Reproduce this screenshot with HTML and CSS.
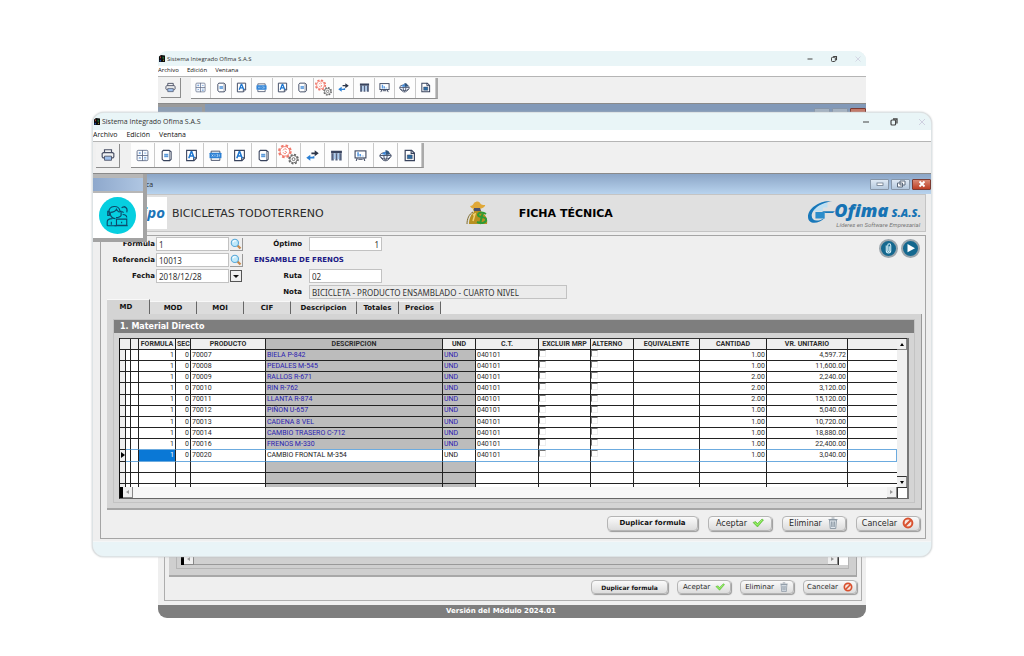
FILE: index.html
```html
<!DOCTYPE html>
<html lang="es">
<head>
<meta charset="utf-8">
<title>Sistema Integrado Ofima S.A.S</title>
<link rel="stylesheet" href="styles.css">
</head>
<body>
<svg class="sprite" aria-hidden="true">
  <defs>
    <symbol id="app" viewBox="0 0 16 16"><path d="M2 4l4-3 8 1v13l-12 0z" fill="#0c0c0c"/><path d="M4 5l2-2v4l-2 1z" fill="#a63a30"/><path d="M9 4l3 1v4l-3-1z" fill="#1d6a34"/><path d="M3 12l3-2v4H3z" fill="#2450a8"/><path d="M10 10l2 1v2l-2-1z" fill="#b3a02a"/></symbol>
    <symbol id="print" viewBox="0 0 24 24"><path d="M6 8V3h12v5M6 17H3.500L2 15V9.500L4 8h16l2 1.500V15l-1.500 2H18" fill="none" stroke="#4a5065" stroke-width="2"/><path d="M6 14h12v7H6z" fill="#9fc0ec" stroke="#4a5065" stroke-width="1.500"/></symbol>
    <symbol id="grid" viewBox="0 0 24 24"><rect x="2" y="2.500" width="20" height="19" rx="2" fill="#fafcff" stroke="#5e6b86" stroke-width="1.600"/><path d="M12 2v20M2 12h20" stroke="#5e6b86" stroke-width="1.600"/><path d="M5 7.500h4M7 5.500v4M15 7.500h4M5.500 15l3 3M8.500 15l-3 3M15 15.500h4M15 18.500h4" stroke="#5b91d4" stroke-width="1.400"/></symbol>
    <symbol id="doc" viewBox="0 0 24 24"><path d="M4 5l2-2.500h11L20.500 5v14L18 21.500H7L4 19z" fill="#fff" stroke="#38435d" stroke-width="2"/><path d="M17.500 3v18" stroke="#38435d" stroke-width="1"/><rect x="7.500" y="8.500" width="8" height="7" fill="#a9cdf3"/><path d="M8 10.500h7M8 13.500h7" stroke="#2877c8" stroke-width="1.400"/></symbol>
    <symbol id="letter" viewBox="0 0 24 24"><path d="M3 2.500h18V17l-4.500 4.500H3z" fill="#fff" stroke="#38435d" stroke-width="2"/><path d="M21 16h-5v5" fill="none" stroke="#38435d" stroke-width="2"/><path d="M7 17l4.500-12h1L17 17M9 13h6" fill="none" stroke="#1f77d0" stroke-width="2.800"/></symbol>
    <symbol id="card" viewBox="0 0 24 24"><path d="M4 8V4h16v4M4 17v4h16v-4" fill="none" stroke="#38435d" stroke-width="1.600"/><rect x="1" y="7" width="22" height="10" rx="1" fill="#2a7fd4"/><path d="M5 10l3 4M8 10l-3 4M11 10v4M14 10h2v4h-2M19 10v4" stroke="#d9ecff" stroke-width="1.200" fill="none"/></symbol>
    <symbol id="gears" viewBox="0 0 24 24"><circle cx="8" cy="8" r="6.200" fill="none" stroke="#f0796c" stroke-width="2.600" stroke-dasharray="2.700 2.170"/><circle cx="8" cy="8" r="5.200" fill="#fff" stroke="#f0796c" stroke-width="1"/><path d="M6 7l2-2 2 1M6 9l2 2 2-2-2-1" fill="none" stroke="#f0796c" stroke-width="1"/><circle cx="17.500" cy="16.500" r="4.600" fill="none" stroke="#666" stroke-width="2.400" stroke-dasharray="2 1.610"/><circle cx="17.500" cy="16.500" r="4" fill="#fff" stroke="#666" stroke-width="1"/><circle cx="17.500" cy="16.500" r="1.600" fill="none" stroke="#666" stroke-width="1"/></symbol>
    <symbol id="swap" viewBox="0 0 24 24"><path d="M10 8h7" stroke="#2d3548" stroke-width="3"/><path d="M16 2.500L23.500 8 16 13.500z" fill="#2d3548"/><path d="M14 16H7M14 17.500v-4" fill="none" stroke="#2a7fd4" stroke-width="3"/><path d="M8 10.500L.5 16 8 21.500z" fill="#2a7fd4"/></symbol>
    <symbol id="columns" viewBox="0 0 24 24"><path d="M2 3h20v5H2z" fill="#38435d"/><path d="M2.500 8h4.500v13H2.500zM10 8h4v13h-4zM17 8h4.500v13H17z" fill="#54627f"/><path d="M7 8h3v11H7zM14 8h3v11h-3z" fill="#a9cbf0"/></symbol>
    <symbol id="board" viewBox="0 0 24 24"><rect x="2" y="3.500" width="20" height="13" fill="#fff" stroke="#38435d" stroke-width="2"/><path d="M6 17l-2 5M18 17l2 5M8 19h8" stroke="#38435d" stroke-width="2"/><path d="M6 6h3v8H6zM10 9h3v5h-3z" fill="#5b9be2"/><path d="M14 12h4v2h-4z" fill="#9cc5f1"/></symbol>
    <symbol id="globe" viewBox="0 0 24 24"><ellipse cx="12" cy="12.500" rx="10.500" ry="6" fill="#eef5ff" stroke="#38435d" stroke-width="1.700"/><path d="M4 15c2 9 14 9 16 0M2 12h20M9 12c0 4 1 7 3 9M15 12c0 4-1 7-3 9" fill="none" stroke="#38435d" stroke-width="1.600"/><path d="M12 11V2a9 9 0 0 1 8 8z" fill="#31567f"/><path d="M5 9l7-5v7z" fill="#3b8ae0"/></symbol>
    <symbol id="report" viewBox="0 0 24 24"><path d="M4 2.500h12l5 5v14H4z" fill="#fff" stroke="#38435d" stroke-width="2.200"/><path d="M15 2v6h6" fill="none" stroke="#38435d" stroke-width="2"/><path d="M8 11h9v7H8z" fill="#2c6da5" stroke="#38435d"/></symbol>
    <symbol id="min" viewBox="0 0 12 12"><path d="M3 6h6" stroke="#444" stroke-width="1.200"/></symbol>
    <symbol id="max" viewBox="0 0 12 12"><rect x="3" y="4" width="4.600" height="5" rx="1" fill="none" stroke="#444" stroke-width="1.200"/><path d="M5 3h4v4.500" fill="none" stroke="#444" stroke-width="1.300"/></symbol>
    <symbol id="close" viewBox="0 0 12 12"><path d="M3 3l6 6M9 3l-6 6" stroke="#cfd0e0" stroke-width="1"/></symbol>
    <symbol id="search" viewBox="0 0 16 16"><path d="M9 9l5 5" stroke="#c68a4e" stroke-width="3"/><circle cx="6.500" cy="6.500" r="4.800" fill="#bfe9fa" stroke="#5aa9d8" stroke-width="1.500"/><path d="M4 6c0-2 2-3 4-2" stroke="#fff" fill="none" stroke-width="1.500"/></symbol>
    <symbol id="check" viewBox="0 0 24 20"><path d="M2 9l5-2 4 4L20 2l3 2-12 14z" fill="#6fdc3c" stroke="#4fae2c"/><path d="M5 9l6 5L20 4" stroke="#b7f58f" fill="none" stroke-width="1.500"/></symbol>
    <symbol id="trash" viewBox="0 0 20 24"><path d="M3 6h14l-1.500 17h-11z" fill="#dfe6ec" stroke="#7e8b98" stroke-width="1.600"/><path d="M1 5h18M7 2h6M7 9l.5 11M10 9v11M13 9l-.5 11" stroke="#7e8b98" stroke-width="1.600" fill="none"/></symbol>
    <symbol id="stop" viewBox="0 0 24 24"><circle cx="12" cy="12" r="8.800" fill="#f6e6df" stroke="#d9512f" stroke-width="4"/><path d="M6 18L18 6" stroke="#d9512f" stroke-width="4"/></symbol>
  </defs>
</svg>

<main class="desktop">
  <section class="window window-back" aria-label="Ventana posterior">
    <header class="titlebar">
      <svg class="app-icon"><use href="#app"/></svg>
      <span class="title">Sistema Integrado Ofima S.A.S</span>
      <button class="winctl" aria-label="Minimizar"><svg><use href="#min"/></svg></button>
      <button class="winctl" aria-label="Restaurar"><svg><use href="#max"/></svg></button>
      <button class="winctl" aria-label="Cerrar"><svg><use href="#close"/></svg></button>
    </header>
    <nav class="menubar"><a href="#">Archivo</a><a href="#">Edición</a><a href="#">Ventana</a></nav>
    <div class="toolbar">
      <button class="tool tool-print" aria-label="Imprimir"><svg><use href="#print"/></svg></button>
      <div class="tool-group">
        <button class="tool" aria-label="Calculadora"><svg><use href="#grid"/></svg></button>
        <button class="tool" aria-label="Documento"><svg><use href="#doc"/></svg></button>
        <button class="tool" aria-label="Texto"><svg><use href="#letter"/></svg></button>
        <button class="tool" aria-label="Códigos"><svg><use href="#card"/></svg></button>
        <button class="tool" aria-label="Texto 2"><svg><use href="#letter"/></svg></button>
        <button class="tool" aria-label="Documento 2"><svg><use href="#doc"/></svg></button>
        <button class="tool tool-gears" aria-label="Configuración"><svg><use href="#gears"/></svg></button>
        <button class="tool" aria-label="Intercambiar"><svg><use href="#swap"/></svg></button>
        <button class="tool" aria-label="Columnas"><svg><use href="#columns"/></svg></button>
        <button class="tool" aria-label="Tablero"><svg><use href="#board"/></svg></button>
        <button class="tool" aria-label="Global"><svg><use href="#globe"/></svg></button>
        <button class="tool" aria-label="Informe"><svg><use href="#report"/></svg></button>
      </div>
    </div>
    <div class="mdi-title">
      <span class="back-palette"></span>
      <button class="mdi-btn" aria-label="Minimizar ficha"></button>
      <button class="mdi-btn" aria-label="Restaurar ficha"></button>
      <button class="mdi-btn mdi-close" aria-label="Cerrar ficha"></button>
    </div>
    <div class="back-body">
      <div class="back-panel">
        <div class="back-frame"><div class="back-grid">
          <div class="hscroll"><i class="block"></i><button class="arrow left" aria-label="Izquierda"></button><span class="track"></span><button class="arrow right" aria-label="Derecha"></button><i class="corner"></i></div>
        </div></div>
        <div class="actions">
          <button class="btn btn-dup">Duplicar formula</button>
          <button class="btn">Aceptar <svg class="i-check"><use href="#check"/></svg></button>
          <button class="btn">Eliminar <svg class="i-trash"><use href="#trash"/></svg></button>
          <button class="btn">Cancelar <svg><use href="#stop"/></svg></button>
        </div>
      </div>
    </div>
    <footer class="status">Versión del Módulo 2024.01</footer>
  </section>

  <section class="window window-front" aria-label="Ficha técnica">
    <header class="titlebar">
      <svg class="app-icon"><use href="#app"/></svg>
      <span class="title">Sistema Integrado Ofima S.A.S</span>
      <button class="winctl" aria-label="Minimizar"><svg><use href="#min"/></svg></button>
      <button class="winctl" aria-label="Restaurar"><svg><use href="#max"/></svg></button>
      <button class="winctl" aria-label="Cerrar"><svg><use href="#close"/></svg></button>
    </header>
    <nav class="menubar"><a href="#">Archivo</a><a href="#">Edición</a><a href="#">Ventana</a></nav>
    <div class="toolbar">
      <button class="tool tool-print" aria-label="Imprimir"><svg><use href="#print"/></svg></button>
      <div class="tool-group">
        <button class="tool" aria-label="Calculadora"><svg><use href="#grid"/></svg></button>
        <button class="tool" aria-label="Documento"><svg><use href="#doc"/></svg></button>
        <button class="tool" aria-label="Texto"><svg><use href="#letter"/></svg></button>
        <button class="tool" aria-label="Códigos"><svg><use href="#card"/></svg></button>
        <button class="tool" aria-label="Texto 2"><svg><use href="#letter"/></svg></button>
        <button class="tool" aria-label="Documento 2"><svg><use href="#doc"/></svg></button>
        <button class="tool tool-gears" aria-label="Configuración"><svg><use href="#gears"/></svg></button>
        <button class="tool" aria-label="Intercambiar"><svg><use href="#swap"/></svg></button>
        <button class="tool" aria-label="Columnas"><svg><use href="#columns"/></svg></button>
        <button class="tool" aria-label="Tablero"><svg><use href="#board"/></svg></button>
        <button class="tool" aria-label="Global"><svg><use href="#globe"/></svg></button>
        <button class="tool" aria-label="Informe"><svg><use href="#report"/></svg></button>
      </div>
    </div>

    <div class="mdi">
      <div class="mdi-title">
        <span class="mdi-caption">ca</span>
        <button class="mdi-btn" aria-label="Minimizar ficha"><svg viewBox="0 0 12 8"><rect x="3" y="3" width="6" height="2.500" fill="#fff" stroke="#6c7a8c" stroke-width=".8"/></svg></button>
        <button class="mdi-btn" aria-label="Restaurar ficha"><svg viewBox="0 0 12 8"><path d="M5 1h5v4H5zM2.500 3h5v4h-5z" fill="#fff" stroke="#5c6a7c"/></svg></button>
        <button class="mdi-btn mdi-close" aria-label="Cerrar ficha"><svg viewBox="0 0 12 8"><path d="M3.500 1.500l5 5M8.500 1.500l-5 5" stroke="#fff" stroke-width="1.800"/></svg></button>
      </div>

      <div class="palette">
        <div class="palette-bar"></div>
        <button class="palette-btn" aria-label="Soporte">
          <svg viewBox="0 0 36 36"><circle cx="18" cy="18" r="18" fill="#06cfe0"/><g fill="none" stroke="#0b4a6b" stroke-width="1.100"><path d="M9.500 15c0-7 10-8 11-1M10 14h-1.500v4H10zM20 14h1.500v4c-1 2-3 2-5 2M11 15c3 0 5-1 6-3 1 2 2 2 3 3M11 15v2c1 3 3 4 5 4M8 28v-4c0-2 2-3 5-3M8 28h9M12 24v3"/><path d="M17 21.500h10v6H17zM15 28h13M22 24v1.500M22 10.500c3-2 6 0 5 3M24 9c3 1 4 3 3 6M23 17c2 0 4 1 4 3M22 14l2 1"/></g></svg>
        </button>
      </div>

      <div class="banner">
        <span class="logo-part">ipo</span>
        <span class="company">BICICLETAS TODOTERRENO</span>
        <svg class="bag" viewBox="0 0 22 24"><path d="M7 8l1 3c-3 2-5 7-5 12h18c1-5-1-9-5-11l-2-4z" fill="#b8901f"/><path d="M7 11C3 13 1 18 1 23" stroke="#7d6a2c" stroke-width="1" fill="none"/><path d="M4 5c2 0 3-1 4-3 2-2 5-2 6 0 1 2 3 2 5 2 1 1-3 4-6 4H8C6 7 5 7 4 5z" fill="#e0a838"/><path d="M8 7h6l1 3H8z" fill="#4a5170"/><path d="M20 13c-3-2-8-2-8 1s7 1 8 4c1 4-5 5-9 3M17 11l-3 12" fill="none" stroke="#2f9a35" stroke-width="2"/><path d="M7 14l2-1-2 7" stroke="#efd071" fill="none" stroke-width="1.500"/></svg>
        <h1>FICHA TÉCNICA</h1>
        <div class="ofima">
          <svg viewBox="0 0 30 28"><path d="M5 7h8V3h9v5h-5v4H5z" fill="#bfe0f3"/><path d="M9 13h10v7H9z" fill="#2c8dcb"/><path d="M27 2C17-1 1 8 1 18c0 9 12 8 18 1-7 5-14 4-14-2C5 10 16 2 27 2z" fill="#1878ba"/><path d="M16 12h14l-2 2h-8z" fill="#1878ba"/></svg>
          <div class="ofima-text"><div class="ofima-name"><b>Ofima</b><b class="sas">S.A.S.</b></div><i>Líderes en Software Empresarial</i></div>
        </div>
      </div>

      <form class="sheet">
        <div class="fields">
          <div class="fields-left">
            <label for="formula">Formula</label><input id="formula" value="1"><button type="button" class="lookup" aria-label="Buscar fórmula"><svg><use href="#search"/></svg></button>
            <label for="ref">Referencia</label><input id="ref" value="10013"><button type="button" class="lookup" aria-label="Buscar referencia"><svg><use href="#search"/></svg></button>
            <label for="fecha">Fecha</label><input id="fecha" value="2018/12/28"><button type="button" class="drop" aria-label="Elegir fecha"></button>
          </div>
          <div class="fields-right">
            <label for="optimo">Óptimo</label><input id="optimo" class="num" value="1">
            <output>ENSAMBLE DE FRENOS</output>
            <label for="ruta">Ruta</label><input id="ruta" value="02">
            <label for="nota">Nota</label><input id="nota" class="note" readonly value="BICICLETA - PRODUCTO ENSAMBLADO - CUARTO NIVEL">
          </div>
          <div class="rounds">
            <button type="button" aria-label="Adjuntar"><svg viewBox="0 0 20 20"><path d="M7 6v7c0 4 6 4 6 0V6c0-3-4-3-4 0v7c0 1.500 2 1.500 2 0V7" fill="none" stroke="#d8f3fa" stroke-width="1.400"/></svg></button>
            <button type="button" aria-label="Reproducir"><svg viewBox="0 0 20 20"><path d="M6 4l10 5.500L6 15z" fill="#fff"/></svg></button>
          </div>
        </div>

        <div class="tabs" role="tablist">
          <button type="button" role="tab" class="tab active">MD</button>
          <button type="button" role="tab" class="tab">MOD</button>
          <button type="button" role="tab" class="tab">MOI</button>
          <button type="button" role="tab" class="tab">CIF</button>
          <button type="button" role="tab" class="tab wide">Descripcion</button>
          <button type="button" role="tab" class="tab mid">Totales</button>
          <button type="button" role="tab" class="tab mid">Precios</button>
        </div>

        <div class="tabpanel">
          <div class="frame">
            <h2>1. Material Directo</h2>
            <div class="gridbox">
              <div class="gridmain">
                <table>
                  <colgroup><col class="c6"><col class="c5"><col class="c8"><col class="c37"><col class="c15"><col class="c75"><col class="c177"><col class="c33"><col class="c63"><col class="c52"><col class="c43"><col class="c66"><col class="c67"><col class="c81"><col></colgroup>
                  <thead><tr><th colspan="2"></th><th></th><th>FORMULA</th><th>SEC</th><th>PRODUCTO</th><th class="g">DESCRIPCION</th><th>UND</th><th>C.T.</th><th>EXCLUIR MRP</th><th class="l">ALTERNO</th><th>EQUIVALENTE</th><th>CANTIDAD</th><th>VR. UNITARIO</th><th></th></tr></thead>
                  <tbody>
                    <tr><td></td><td></td><td></td><td>1</td><td>0</td><td>70007</td><td>BIELA P-842</td><td>UND</td><td>040101</td><td><input type="checkbox" aria-label="Excluir MRP"></td><td><input type="checkbox" aria-label="Alterno"></td><td></td><td>1.00</td><td>4,597.72</td><td></td></tr>
                    <tr><td></td><td></td><td></td><td>1</td><td>0</td><td>70008</td><td>PEDALES M-545</td><td>UND</td><td>040101</td><td><input type="checkbox" aria-label="Excluir MRP"></td><td><input type="checkbox" aria-label="Alterno"></td><td></td><td>1.00</td><td>11,600.00</td><td></td></tr>
                    <tr><td></td><td></td><td></td><td>1</td><td>0</td><td>70009</td><td>RALLOS R-671</td><td>UND</td><td>040101</td><td><input type="checkbox" aria-label="Excluir MRP"></td><td><input type="checkbox" aria-label="Alterno"></td><td></td><td>2.00</td><td>2,240.00</td><td></td></tr>
                    <tr><td></td><td></td><td></td><td>1</td><td>0</td><td>70010</td><td>RIN R-762</td><td>UND</td><td>040101</td><td><input type="checkbox" aria-label="Excluir MRP"></td><td><input type="checkbox" aria-label="Alterno"></td><td></td><td>2.00</td><td>3,120.00</td><td></td></tr>
                    <tr><td></td><td></td><td></td><td>1</td><td>0</td><td>70011</td><td>LLANTA R-874</td><td>UND</td><td>040101</td><td><input type="checkbox" aria-label="Excluir MRP"></td><td><input type="checkbox" aria-label="Alterno"></td><td></td><td>2.00</td><td>15,120.00</td><td></td></tr>
                    <tr><td></td><td></td><td></td><td>1</td><td>0</td><td>70012</td><td>PIÑON U-657</td><td>UND</td><td>040101</td><td><input type="checkbox" aria-label="Excluir MRP"></td><td><input type="checkbox" aria-label="Alterno"></td><td></td><td>1.00</td><td>5,040.00</td><td></td></tr>
                    <tr><td></td><td></td><td></td><td>1</td><td>0</td><td>70013</td><td>CADENA 8 VEL</td><td>UND</td><td>040101</td><td><input type="checkbox" aria-label="Excluir MRP"></td><td><input type="checkbox" aria-label="Alterno"></td><td></td><td>1.00</td><td>10,720.00</td><td></td></tr>
                    <tr><td></td><td></td><td></td><td>1</td><td>0</td><td>70014</td><td>CAMBIO TRASERO C-712</td><td>UND</td><td>040101</td><td><input type="checkbox" aria-label="Excluir MRP"></td><td><input type="checkbox" aria-label="Alterno"></td><td></td><td>1.00</td><td>18,880.00</td><td></td></tr>
                    <tr class="before"><td></td><td></td><td></td><td>1</td><td>0</td><td>70016</td><td>FRENOS M-330</td><td>UND</td><td>040101</td><td><input type="checkbox" aria-label="Excluir MRP"></td><td><input type="checkbox" aria-label="Alterno"></td><td></td><td>1.00</td><td>22,400.00</td><td></td></tr>
                    <tr class="current"><td><i class="pointer"></i></td><td></td><td></td><td>1</td><td>0</td><td>70020</td><td>CAMBIO FRONTAL M-354</td><td>UND</td><td>040101</td><td><input type="checkbox" aria-label="Excluir MRP"></td><td><input type="checkbox" aria-label="Alterno"></td><td></td><td>1.00</td><td>3,040.00</td><td></td></tr>
                    <tr><td></td><td></td><td></td><td></td><td></td><td></td><td></td><td></td><td></td><td></td><td></td><td></td><td></td><td></td><td></td></tr>
                    <tr><td></td><td></td><td></td><td></td><td></td><td></td><td></td><td></td><td></td><td></td><td></td><td></td><td></td><td></td><td></td></tr>
                    <tr class="stub"><td></td><td></td><td></td><td></td><td></td><td></td><td></td><td></td><td></td><td></td><td></td><td></td><td></td><td></td><td></td></tr>
                  </tbody>
                </table>
                <div class="vscroll"><button type="button" class="arrow up" aria-label="Arriba"></button><span class="track"></span><button type="button" class="arrow down" aria-label="Abajo"></button></div>
              </div>
              <div class="hscroll"><i class="block"></i><button type="button" class="arrow left" aria-label="Izquierda"></button><span class="track"></span><button type="button" class="arrow right" aria-label="Derecha"></button><i class="corner"></i></div>
            </div>
          </div>
        </div>

        <div class="actions">
          <button type="button" class="btn btn-dup">Duplicar formula</button>
          <button type="button" class="btn">Aceptar <svg class="i-check"><use href="#check"/></svg></button>
          <button type="button" class="btn">Eliminar <svg class="i-trash"><use href="#trash"/></svg></button>
          <button type="button" class="btn">Cancelar <svg><use href="#stop"/></svg></button>
        </div>
      </form>
    </div>
    <footer class="front-foot"></footer>
  </section>
</main>
</body>
</html>
```

FILE: styles.css
```css
* { box-sizing: border-box; }
body { margin: 0; background: #fff; color: #2b2b2b; font-family: "DejaVu Sans", sans-serif; }
button, input { font: inherit; color: inherit; margin: 0; padding: 0; border: 0; background: none; min-width: 0; }
svg { display: block; flex: none; }
.sprite { position: absolute; width: 0; height: 0; }

.desktop { position: relative; min-height: 656px; overflow: hidden; }
.window { position: absolute; display: flex; flex-direction: column; overflow: hidden; background: #efefef; }
.window-back { left: 158px; right: 158px; top: 51px; height: 567px; border-radius: 9px; }
.window-front { left: 92px; right: 92px; top: 112px; border: 1px solid #dde3e5; border-radius: 12px; box-shadow: 0 0 2px #b8bcbe; }

/* window chrome */
.titlebar { display: flex; align-items: center; height: 17px; background: #e9f5f7; font: 7px "Open Sans", sans-serif; }
.app-icon { width: 8px; height: 9px; }
.title { flex: 1; padding-left: 1px; color: #333; }
.winctl { width: 28px; display: grid; place-items: center; }
.winctl svg { width: 12px; height: 12px; }
.titlebar .winctl:last-child { width: 18px; margin-left: 5px; }
.menubar { display: flex; gap: 9px; height: 11px; background: #fff; font: 7px/9px "Open Sans", sans-serif; }
.menubar a { color: #111; text-decoration: none; }
.toolbar { display: flex; align-items: center; height: 33px; padding: 0 3px 4px; gap: 11px; border-top: 1px solid #b5b5b5; border-bottom: 1px solid #8a8a8a; background: #f0f0f0; }
.tool { width: 24px; height: 24px; display: grid; place-items: center; background: #fdfdfd; border-right: 1px solid #c9c9c9; }
.tool svg { width: 13px; height: 13px; }
.tool-gears svg { width: 23px; height: 22px; }
.tool-print { background: #f2f2f2; border-bottom: 1px solid #8d8d8d; border-right-color: #8d8d8d; }
.tool-print svg { width: 14px; height: 14px; }
.tool-group { display: flex; width: 293px; border-bottom: 1px solid #8d8d8d; border-right: 2px solid #aaa; }
.tool-group .tool { flex: 1; }
.mdi-title { display: flex; align-items: center; justify-content: flex-end; gap: 2px; height: 20px; background: linear-gradient(#8ba5c6, #b8d3ee); }
.mdi-caption { flex: 1; padding-left: 53px; font: 7px "Open Sans", sans-serif; }
.mdi-btn { width: 19px; height: 11px; display: grid; place-items: center; border: 1px solid #8796a8; border-radius: 1px; background: linear-gradient(#dfe9f4, #b4c8dd); }
.mdi-btn svg { width: 12px; height: 8px; }
.mdi-close { background: linear-gradient(#d98873, #bd3e24); border-color: #7c3a31; }

/* back window */
.window-back .titlebar { height: 15px; flex: none; font-size: 6px; }
.window-back .winctl { width: 24px; }
.window-back .winctl svg { width: 10px; height: 10px; }
.window-back .titlebar .winctl:last-child { width: 16px; margin-left: 4px; }
.window-back .menubar { height: 10px; flex: none; gap: 8px; font-size: 6px; }
.window-back .toolbar { height: 28px; flex: none; gap: 10px; padding-bottom: 4px; }
.window-back .tool { width: 20px; height: 20px; }
.window-back .tool-group { width: 247px; }
.window-back .tool svg { width: 11px; height: 11px; }
.window-back .tool-gears svg { width: 19px; height: 18px; }
.window-back .mdi-title { height: 17px; flex: none; background: #8299b8; }
.window-back .mdi-btn { height: 9px; width: 16px; background: #a5b3c2; }
.window-back .mdi-close { background: #c27766; }
.back-palette { align-self: stretch; width: 47px; margin-right: auto; border: 3px solid #9a9a9a; border-left: 0; background: #8c9db3; }
.back-body { flex: 1; display: flex; flex-direction: column; padding: 0 4px 4px 6px; }
.back-panel { flex: 1; display: flex; flex-direction: column; border: 1px solid #adadad; }
.back-frame { flex: 1; display: flex; margin: 0 4px; padding: 0 7px 6px; background: #cfcfcf; border-right: 1px solid #a3a3a3; border-bottom: 2px solid #a8a8a8; }
.back-grid { flex: 1; display: flex; align-items: flex-end; padding: 0 0 3px 4px; border: 1px solid #b5b5b5; }
.back-grid .hscroll { flex: 1; }
.back-grid .track { background: #d0d0d0; border-bottom: 1px solid #999; }
.window-back .actions { height: 23px; padding: 0 4px 3px 0; gap: 9px; }
.window-back .btn { width: 54px; height: 14px; font-size: 7px; }
.window-back .btn-dup { width: 77px; font-size: 6px; }
.window-back .btn svg { width: 10px; height: 10px; }
.status { height: 13px; flex: none; background: #7e7e7e; color: #fff; text-align: center; font: bold 7px/13px "DejaVu Sans", sans-serif; padding-right: 22px; }

/* document window */
.mdi { position: relative; padding-bottom: 2px; }
.palette { position: absolute; left: 0; top: 0; width: 54px; padding: 4px 0 0; background: #b7b7b7; border-right: 4px solid #a3a3a3; border-bottom: 4px solid #a3a3a3; }
.palette-bar { height: 13px; background: linear-gradient(90deg, #8ea8cc, #afc6e2); margin-bottom: 2px; }
.palette-btn { display: block; width: 100%; padding: 4px 5px 4px 6px; background: #fff; }
.palette-btn svg { width: 37px; height: 37px; }
.banner { display: flex; align-items: center; height: 38px; margin-right: 5px; padding: 0 4px 0 45px; background: #e0e0e0; border: 1px solid #c4c4c4; }
.logo-part { width: 28px; align-self: stretch; margin: 2px 0; background: #fff; color: #1c75b8; font: italic bold 15px/30px "Open Sans", sans-serif; text-align: right; padding-right: 2px; }
.company { margin-left: 5px; font-size: 11px; white-space: nowrap; }
.bag { width: 22px; height: 24px; margin-left: 142px; }
.banner h1 { margin: 0 auto 0 31px; color: #000; font-size: 11px; white-space: nowrap; }
.ofima { display: flex; align-items: center; color: #1773b4; }
.ofima > svg { width: 30px; height: 26px; margin-right: -2px; }
.ofima-text { padding-top: 2px; }
.ofima-name { display: flex; align-items: baseline; gap: 3px; font: italic 18px/18px "Open Sans", sans-serif; }
.ofima-name b { font-weight: 800; }
.ofima-name .sas { font-size: 11px; }
.ofima-text i { display: block; padding-left: 2px; color: #777; font: italic 6px/6px Roboto, sans-serif; }

/* form */
.sheet { margin: 3px 5px 0 7px; border: 1px solid #a5a5a5; background: #efefef; }
.fields { display: flex; align-items: flex-start; padding: 1px 5px 0 1px; height: 63px; }
.fields-left, .fields-right { display: grid; grid-auto-rows: 14px; row-gap: 2px; align-items: center; font: bold 7px "DejaVu Sans", sans-serif; }
.fields-left { grid-template-columns: 53px 73px 15px; column-gap: 1px; }
.fields-right { grid-template-columns: 48px 258px; column-gap: 7px; margin-left: 9px; }
.fields label { text-align: right; color: #111; }
.fields input { height: 14px; border: 1px solid #c2c2c2; background: #fff; padding: 0 2px; font: 8px "Noto Sans", sans-serif; color: #333; }
.fields-right input { width: 73px; }
.fields-right .num { text-align: right; }
.fields-right .note { width: auto; background: #ebebeb; }
.fields output { grid-column: 1 / -1; color: #1c1a86; }
.lookup { width: 13px; height: 13px; display: grid; place-items: center; border-right: 1px solid #999; border-bottom: 1px solid #999; }
.lookup svg { width: 12px; height: 12px; }
.drop { width: 12px; height: 12px; display: grid; place-items: center; border: 1px solid #555; }
.drop::before { content: ""; border: 3px solid transparent; border-top-color: #111; border-bottom: 0; }
.rounds { display: flex; gap: 3px; margin: 2px 0 0 auto; }
.rounds button { width: 19px; height: 19px; border-radius: 50%; border: 2px solid #9aa5ac; background: #14688f; }
.rounds svg { width: 15px; height: 15px; }

.tabs { display: flex; align-items: flex-end; height: 15px; padding-left: 6px; font: bold 7px "DejaVu Sans", sans-serif; color: #111; }
.tab { width: 47px; height: 13px; background: #dcdcdc; border-right: 1px solid #666; border-top: 1px solid #f8f8f8; }
.tab.active { width: 43px; height: 15px; background: #d4d4d4; padding-right: 4px; }
.tab.wide { width: 66px; }
.tab.mid { width: 42px; }
.tabpanel { margin: 0 3px 0 6px; padding: 5px 6px; background: #d4d4d4; border-right: 1px solid #999; border-bottom: 2px solid #a6a6a6; }
.frame { border: 1px solid #c3c3c3; padding-bottom: 3px; }
.frame h2 { margin: 0; padding-left: 6px; height: 13px; background: #7e7e7e; color: #fff; font: bold 8px/13px "DejaVu Sans", sans-serif; }

/* data grid */
.gridbox { margin: 5px 5px 0; border-left: 1px solid #111; border-right: 2px solid #777; border-bottom: 1px solid #666; background: #fff; }
.gridmain { display: flex; border-top: 1px solid #333; }
.gridmain table { flex: 1; width: 100%; height: 148px; table-layout: fixed; border-collapse: separate; border-spacing: 0; font: 7px/9px Roboto, sans-serif; }
th, td { padding: 0 1px; height: 11px; border-right: 1px solid #222; border-bottom: 1px solid #222; white-space: nowrap; overflow: hidden; text-align: left; }
th { background: #efefef; text-align: center; font-weight: bold; }
th.l { text-align: left; }
th.g { background: #b9b9b9; }
tr > :last-child { border-right: 0; }
td:first-child { background: #efefef; padding: 0; }
td:nth-child(4), td:nth-child(5), td:nth-child(13), td:nth-child(14) { text-align: right; }
td:nth-child(7), td:nth-child(8) { background: #bcbcbc; color: #2a21b0; }
td input { appearance: none; display: block; width: 7px; height: 7px; border: 1px solid #eee; border-top-color: #777; border-left-color: #777; background: #fff; }
td:has(input) { padding: 0; vertical-align: top; }
.before td { border-bottom-color: #6cabdf; }
.before td:first-child, .current td:first-child { border-bottom-color: #222; }
.current td { border-bottom-color: #6cabdf; }
.current td:nth-child(4) { background: #0a78d6; color: #fff; }
.current td:nth-child(7), .current td:nth-child(8) { background: #fff; color: #222; }
.current td:last-child { border-right: 1px solid #6cabdf; }
.stub td { height: 3px; border-bottom: 0; }
.pointer { display: block; width: 0; margin-left: 1px; border: 3px solid transparent; border-left: 4px solid #000; border-right: 0; }
.c5 { width: 5px; } .c6 { width: 6px; } .c8 { width: 8px; } .c15 { width: 15px; } .c33 { width: 33px; } .c37 { width: 37px; }
.c43 { width: 43px; } .c52 { width: 52px; } .c63 { width: 63px; } .c66 { width: 66px; } .c67 { width: 67px; } .c75 { width: 75px; } .c81 { width: 81px; } .c177 { width: 177px; }
.vscroll { width: 10px; display: flex; flex-direction: column; background: #f0f0f0; }
.vscroll .track, .hscroll .track { flex: 1; }
.hscroll { display: flex; height: 11px; background: #f7f7f7; }
.block { width: 3px; background: #000; }
.corner { width: 10px; background: #fff; border-left: 1px solid #333; border-top: 1px solid #333; }
.arrow { width: 10px; height: 11px; display: grid; place-items: center; background: #f0f0f0; border-right: 1px solid #888; border-bottom: 1px solid #888; }
.arrow::before { content: ""; border: 2px solid transparent; }
.up::before { border-bottom: 3px solid #000; border-top: 0; }
.down { border-top: 1px solid #333; border-bottom: 0; }
.down::before { border-top: 3px solid #000; border-bottom: 0; }
.left::before { border-right: 3px solid #999; border-left: 0; }
.right::before { border-left: 3px solid #999; border-right: 0; }

/* actions */
.actions { display: flex; justify-content: flex-end; align-items: center; gap: 10px; height: 28px; padding: 0 5px 2px 0; }
.btn { display: flex; align-items: center; justify-content: center; gap: 5px; width: 64px; height: 15px; border: 1px solid #b5b5b5; border-radius: 4px; background: linear-gradient(#fafafa, #dcdcdc); box-shadow: 1px 1px 1px #999; font: 8px "DejaVu Sans", sans-serif; }
.btn-dup { width: 91px; font-weight: bold; font-size: 7px; color: #111; }
.btn svg { width: 12px; height: 12px; }
.front-foot { height: 15px; background: #e9f4f7; border-top: 1px solid #f4f6f7; }
```
